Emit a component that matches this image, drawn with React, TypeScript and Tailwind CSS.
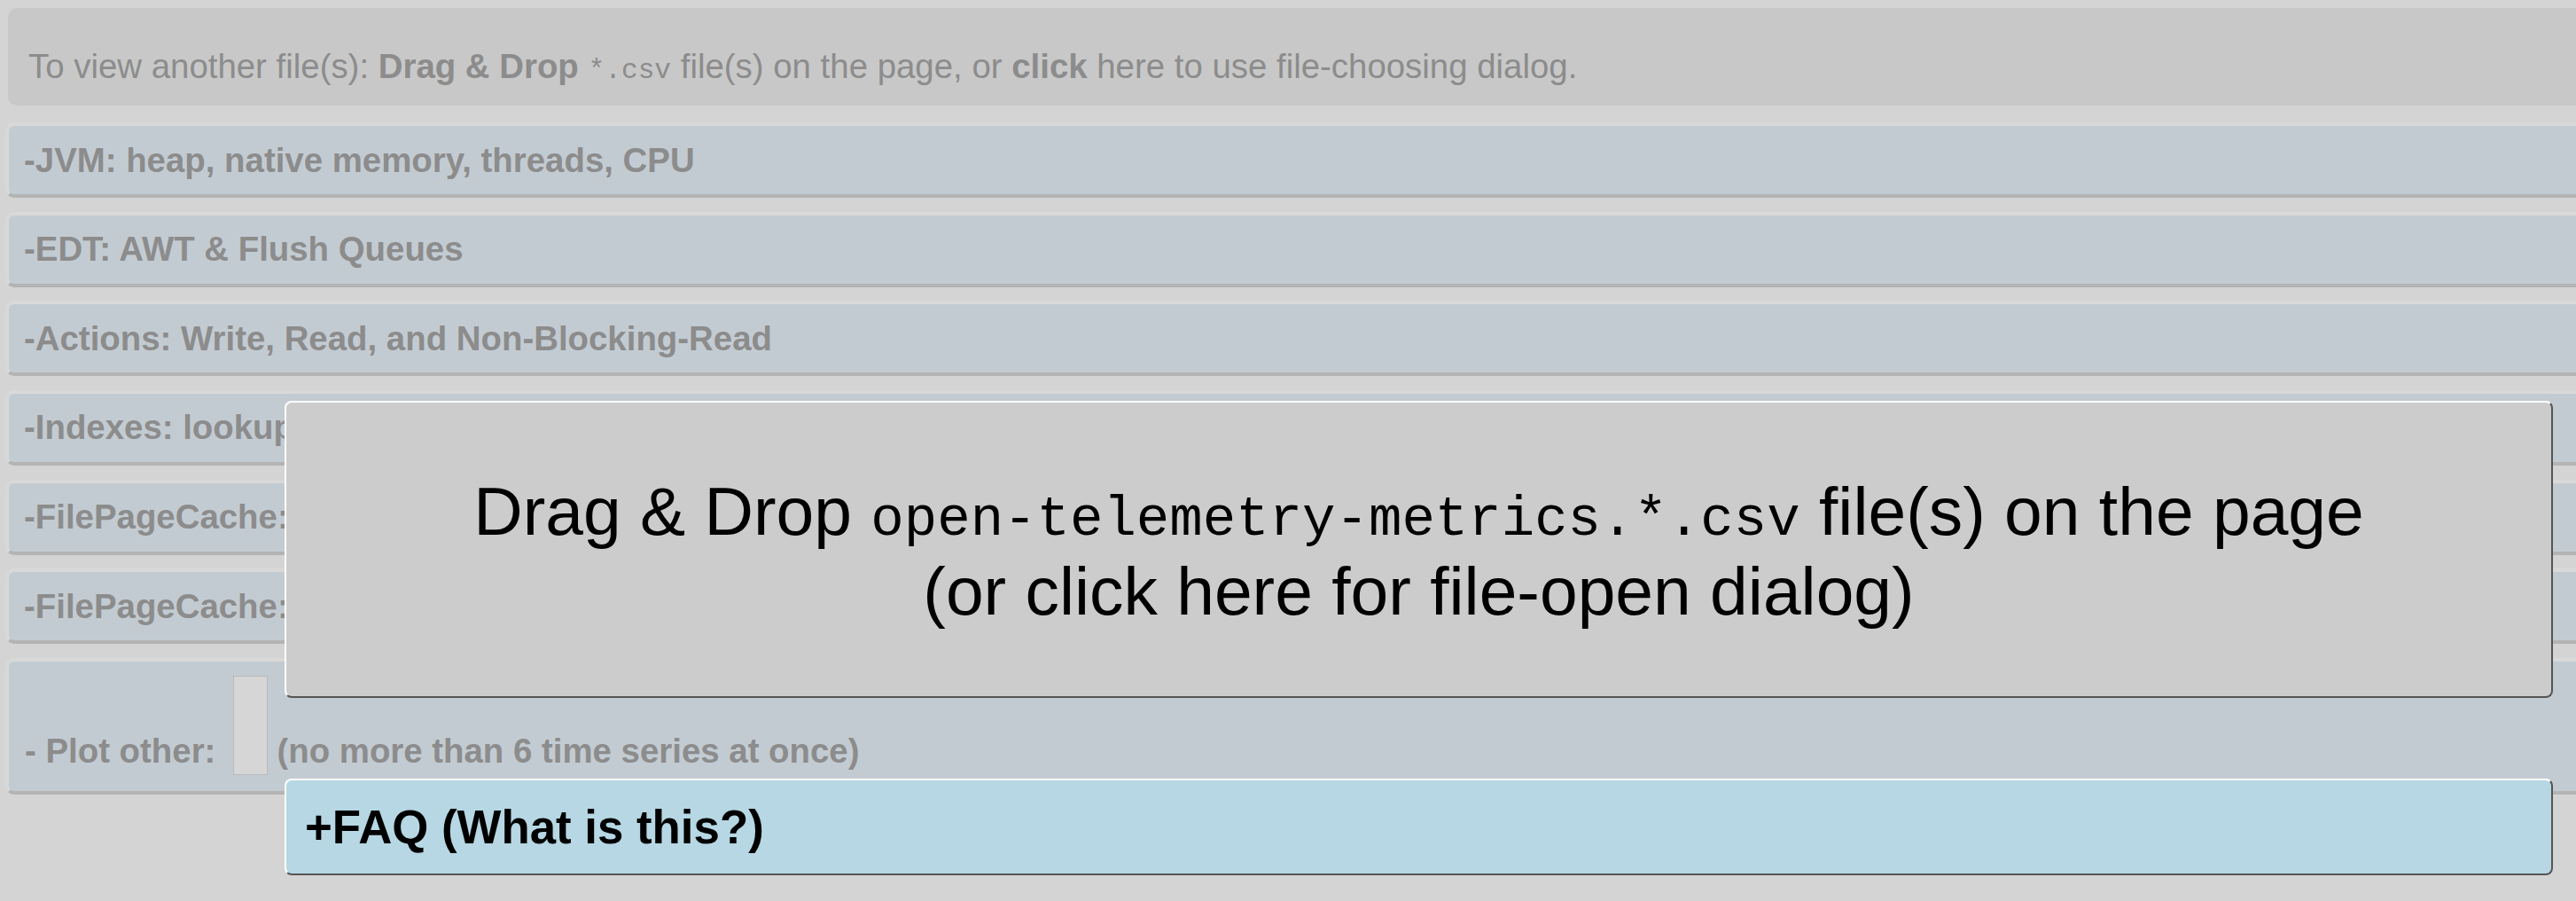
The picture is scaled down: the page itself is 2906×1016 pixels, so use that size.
import React from 'react';

const SECTIONS = [
  '-JVM: heap, native memory, threads, CPU',
  '-EDT: AWT & Flush Queues',
  '-Actions: Write, Read, and Non-Blocking-Read',
  '-Indexes: lookups',
  '-FilePageCache: hits',
  '-FilePageCache: pages',
];

const Section: React.FC<{ title: string }> = ({ title }) => (
  <div className="ml-[6px] flex h-[85px] items-center rounded-l-[10px] border-t-[4px] border-b-[4px] border-l-[4px] border-t-[#d9d9d9] border-b-[#b4b4b4] border-l-[#d8d8d8] bg-[#c3cbd2] pl-[17px]">
    <span className="whitespace-nowrap text-[38.4px] font-bold leading-[44px] text-[#8c8c8c]">{title}</span>
  </div>
);

const App: React.FC = () => {
  return (
    <div
      className="relative h-[1016px] w-full overflow-hidden bg-[#d4d4d4]"
      style={{ fontFamily: '"Liberation Sans", Arial, sans-serif' }}
    >
      {/* top banner */}
      <div className="ml-[9px] mt-[9px] flex h-[110px] items-end rounded-l-[10px] bg-[#c8c8c8] pb-[22px] pl-[23px]">
        <p className="whitespace-nowrap text-[38.4px] leading-[44px] text-[#8c8c8c]">
          To view another file(s): <b>Drag &amp; Drop</b>{' '}
          <code className="text-[31.2px] leading-none" style={{ fontFamily: '"Liberation Mono", "Courier New", monospace' }}>
            *.csv
          </code>{' '}
          file(s) on the page, or <b>click</b> here to use file-choosing dialog.
        </p>
      </div>

      <div className="mt-[19px] flex flex-col gap-[15.67px]">
        {SECTIONS.map((s) => (
          <Section key={s} title={s} />
        ))}
        <div className="ml-[6px] flex h-[154px] items-end rounded-l-[10px] border-t-[4px] border-b-[4px] border-l-[4px] border-t-[#d9d9d9] border-b-[#b4b4b4] border-l-[#d8d8d8] bg-[#c3cbd2] pb-[23px] pl-[18px]">
          <span className="whitespace-nowrap text-[38.4px] font-bold leading-[44px] text-[#8c8c8c]">- Plot other:</span>
          <div className="mb-[-5px] ml-[20px] h-[112px] w-[39px] border border-[#bababa] bg-[#d6d6d6]" />
          <span className="ml-[10px] whitespace-nowrap text-[38.4px] font-bold leading-[44px] text-[#8c8c8c]">
            (no more than 6 time series at once)
          </span>
        </div>
      </div>

      {/* drop dialog overlay */}
      <div className="absolute left-[321px] right-[26px] top-[452px] flex flex-col gap-[91px]">
        <div className="flex h-[335px] flex-col items-center justify-center rounded-[8px] border-2 border-t-white border-l-white border-r-[#555555] border-b-[#555555] bg-[#cccccc] pt-[3px] text-black">
          <div className="whitespace-nowrap text-[76.8px] leading-[90px]">
            Drag &amp; Drop{' '}
            <code className="text-[62.4px] leading-none" style={{ fontFamily: '"Liberation Mono", "Courier New", monospace' }}>
              open-telemetry-metrics.*.csv
            </code>{' '}
            file(s) on the page
          </div>
          <div className="whitespace-nowrap text-[76.8px] leading-[90px]">(or click here for file-open dialog)</div>
        </div>
        <div className="flex h-[109px] items-center rounded-[8px] border-2 border-t-white border-l-white border-r-[#555555] border-b-[#555555] bg-[#b6d7e3] pl-[21px]">
          <span className="whitespace-nowrap text-[52.8px] font-bold leading-[60px] text-black">+FAQ (What is this?)</span>
        </div>
      </div>
    </div>
  );
};

export default App;
